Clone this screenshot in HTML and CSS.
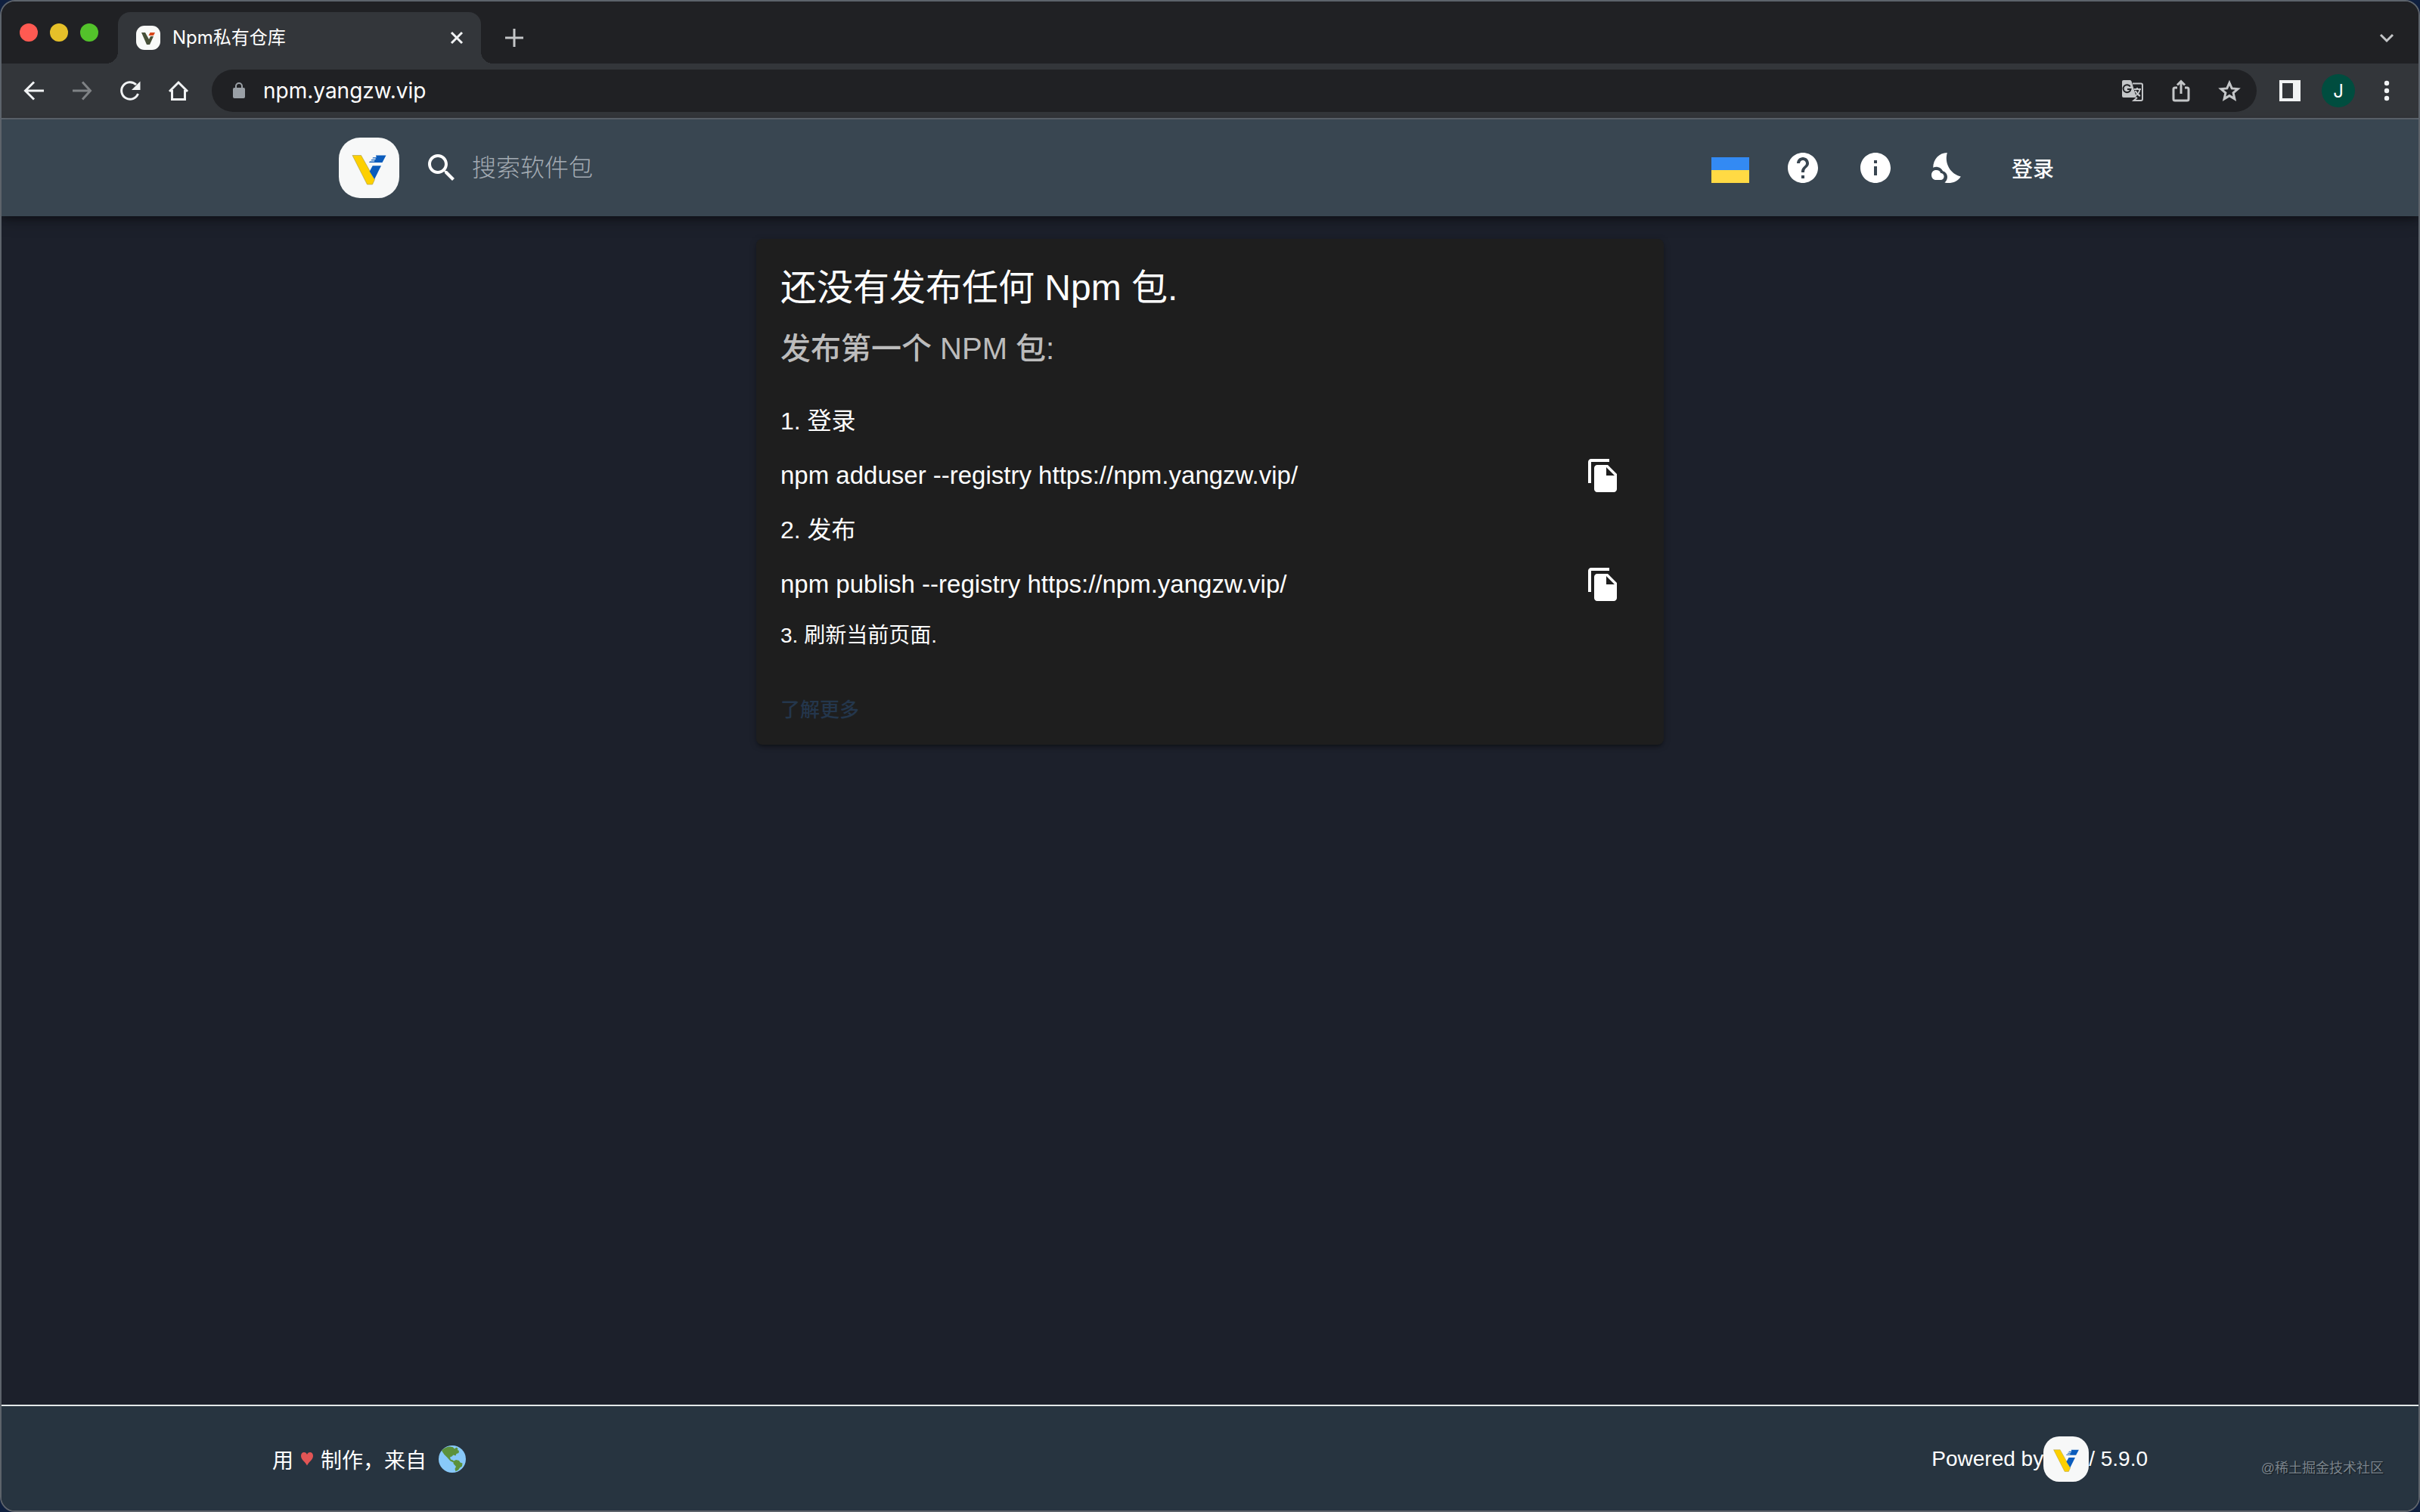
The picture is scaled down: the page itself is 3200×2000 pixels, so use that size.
FILE: index.html
```html
<!DOCTYPE html>
<html lang="zh-CN">
<head>
<meta charset="utf-8">
<meta name="viewport" content="width=device-width, initial-scale=1">
<title>Npm私有仓库</title>
<link rel="stylesheet" href="styles.css">
</head>
<body>
<svg class="defs" aria-hidden="true">
  <symbol id="logo" viewBox="0 0 80 80">
    <rect width="80" height="80" rx="28" fill="#f7f8f8"/>
    <path d="M18 23.500h11.500l18 32-3 6.500h-7z" fill="#fdd000" stroke="#a59a50" stroke-width=".6"/>
    <path d="M49 23.500h13.500l-5 9.500H40l1-1.500h6l.5-1.200h-5l.8-1.300h5l.6-1.500h-4.500l.8-1.300h4.500z" fill="#0b5cbc"/>
    <path d="M44.700 37.300H56L47.200 55 40.700 44.700z" fill="#0b5cbc"/>
  </symbol>
  <symbol id="copy" viewBox="0 0 24 24">
    <path d="M16 1H4c-1.100 0-2 .9-2 2v14h2V3h12V1zm-1 4l6 6v10c0 1.100-.9 2-2 2H7.990C6.890 23 6 22.100 6 21l.01-14c0-1.100.89-2 1.990-2h7zm-1 7h5.500L14 6.500V12z"/>
  </symbol>
</svg>
<div class="window">
  <div class="tabstrip">
    <div class="lights"><span class="light red"></span><span class="light yellow"></span><span class="light green"></span></div>
    <div class="tab">
      <svg class="favicon" viewBox="0 0 32 32"><rect width="32" height="32" rx="11" fill="#f9faf8"/><path d="M7 9h5l5 9 2-4h4l-5 11h-4z" fill="#475038"/><path d="M18.500 9H25l-2 4h-6.500z" fill="#d8481c"/></svg>
      <span class="tab-title">Npm私有仓库</span>
      <button class="chrome-btn tab-close" aria-label="关闭标签页"><svg viewBox="0 0 24 24"><path d="M5 5l14 14M19 5L5 19"/></svg></button>
    </div>
    <button class="chrome-btn new-tab" aria-label="新标签页"><svg viewBox="0 0 24 24"><path d="M12 0v24M0 12h24"/></svg></button>
    <button class="chrome-btn tab-menu" aria-label="搜索标签页"><svg viewBox="0 0 24 24"><path d="M4 8l8 8 8-8"/></svg></button>
  </div>
  <div class="toolbar">
    <div class="nav">
      <button class="chrome-btn" aria-label="后退"><svg viewBox="0 0 32 32"><path d="M30 16H6M17 4.500L5.500 16 17 27.500"/></svg></button>
      <button class="chrome-btn dim" aria-label="前进"><svg viewBox="0 0 32 32"><path d="M4 16h23M17 4.500L27.500 16 17 27.500"/></svg></button>
      <button class="chrome-btn" aria-label="重新加载"><svg viewBox="0 0 32 32"><path d="M26.500 20A11.300 11.300 0 1 1 24 8"/><path class="solid" d="M29.500 3.500V15H18z"/></svg></button>
      <button class="chrome-btn" aria-label="主页"><svg viewBox="0 0 32 32"><path d="M4 17L16 5l12 12M7.500 15v12.500h17V15"/></svg></button>
    </div>
    <div class="omnibox">
      <svg class="lock" viewBox="0 0 16 22"><rect y="7" width="16" height="14" rx="2" fill="#9aa0a6"/><path d="M4 8V5a4 4 0 0 1 8 0v3" fill="none" stroke="#9aa0a6" stroke-width="2"/></svg>
      <input class="url" aria-label="地址" value="npm.yangzw.vip">
      <div class="omni-actions">
        <button class="chrome-btn soft" aria-label="翻译"><svg viewBox="0 0 32 32"><path class="solid" d="M4 2h8.500a2 2 0 0 1 2 1.500L21 25H4a2 2 0 0 1-2-2V4a2 2 0 0 1 2-2z"/><path class="thin" d="M16 6.500h11a2 2 0 0 1 2 2v18.500a2 2 0 0 1-2 2H17.500L22 25M18 14h9M22 12v2M25.500 14c-.5 4-3 7-5.500 8.500M19.500 16c1.500 3 3.500 5.500 6.500 7"/><path class="cut" d="M12.800 10.500a5 5 0 1 0 .7 3.500H9"/></svg></button>
        <button class="chrome-btn soft" aria-label="分享"><svg viewBox="0 0 32 32"><path d="M11 12H8a2 2 0 0 0-2 2v13a2 2 0 0 0 2 2h16a2 2 0 0 0 2-2V14a2 2 0 0 0-2-2h-3M16 20V4M11 8.500L16 3.500l5 5"/></svg></button>
        <button class="chrome-btn soft" aria-label="收藏"><svg viewBox="0 0 32 32"><path d="M16 5.500l3.200 7.400 8 .7-6.100 5.300 1.800 7.900L16 22.600l-6.900 4.200 1.800-7.900-6.100-5.300 8-.7z"/></svg></button>
      </div>
    </div>
    <div class="chrome-right">
      <button class="chrome-btn" aria-label="侧边栏"><svg viewBox="0 0 32 32"><path class="solid" fill-rule="evenodd" d="M2 2h28v28H2zM6 6v20h14V6z"/></svg></button>
      <button class="avatar">J</button>
      <button class="chrome-btn" aria-label="菜单"><svg viewBox="0 0 32 32"><g class="solid"><circle cx="16" cy="6" r="3.200"/><circle cx="16" cy="16" r="3.200"/><circle cx="16" cy="26" r="3.200"/></g></svg></button>
    </div>
  </div>

  <header class="header">
    <div class="header-inner">
      <a class="logo" href="#" aria-label="首页"><svg viewBox="0 0 80 80"><use href="#logo"/></svg></a>
      <label class="search">
        <svg class="icon" viewBox="0 0 24 24"><path d="M15.500 14h-.79l-.28-.27C15.410 12.590 16 11.110 16 9.500 16 5.910 13.090 3 9.500 3S3 5.910 3 9.500 5.910 16 9.500 16c1.610 0 3.090-.59 4.230-1.570l.27.28v.79l5 4.990L20.490 19l-4.990-5zm-6 0C7.010 14 5 11.990 5 9.500S7.010 5 9.500 5 14 7.010 14 9.500 11.990 14 9.500 14z"/></svg>
        <input class="search-input" type="text" placeholder="搜索软件包">
      </label>
      <nav class="actions">
        <button class="icon-btn" aria-label="语言"><svg class="flag" viewBox="0 0 50 34"><path fill="#338af3" d="M0 0h50v17H0z"/><path fill="#ffda44" d="M0 17h50v17H0z"/></svg></button>
        <button class="icon-btn" aria-label="帮助"><svg class="icon" viewBox="0 0 24 24"><path d="M12 2C6.480 2 2 6.480 2 12s4.480 10 10 10 10-4.480 10-10S17.520 2 12 2zm1 17h-2v-2h2v2zm2.070-7.750l-.9.920C13.450 12.900 13 13.500 13 15h-2v-.5c0-1.100.45-2.100 1.170-2.830l1.240-1.260c.37-.36.590-.86.590-1.410 0-1.100-.9-2-2-2s-2 .9-2 2H8c0-2.210 1.790-4 4-4s4 1.790 4 4c0 .88-.36 1.680-.93 2.250z"/></svg></button>
        <button class="icon-btn" aria-label="信息"><svg class="icon" viewBox="0 0 24 24"><path d="M12 2C6.480 2 2 6.480 2 12s4.480 10 10 10 10-4.480 10-10S17.520 2 12 2zm1 15h-2v-6h2v6zm0-8h-2V7h2v2z"/></svg></button>
        <button class="icon-btn" aria-label="深色模式"><svg class="icon" viewBox="1 0 24 24"><path d="M12.400 2C7 2.100 3.100 6.300 3.100 11.900c.6-.3 1.300-.5 2-.5 1.900 0 3.600 1.100 4.400 2.700 1.700.5 3 2 3 3.900 0 1.600-.7 2.900-1.800 3.700 3.900 1.100 8.600-.5 10.700-4C14.500 16.200 10.400 9 12.400 2z"/><path d="M8.100 15.500H8C7.800 14 6.600 13.500 5 13.500c-1.700 0-3 1.300-3 3.200S3.300 20 5 20h3.100c1.200 0 2.200-1 2.200-2.250s-1-2.250-2.200-2.250z"/></svg></button>
        <button class="login">登录</button>
      </nav>
    </div>
  </header>

  <main class="main">
    <section class="card">
      <h1 class="title">还没有发布任何 Npm 包.</h1>
      <h2 class="subtitle">发布第一个 NPM 包:</h2>
      <p class="step">1. 登录</p>
      <div class="command"><span>npm adduser --registry https://npm.yangzw.vip/</span><button class="icon-btn" aria-label="复制"><svg class="icon" viewBox="0 0 24 24"><use href="#copy"/></svg></button></div>
      <p class="step">2. 发布</p>
      <div class="command"><span>npm publish --registry https://npm.yangzw.vip/</span><button class="icon-btn" aria-label="复制"><svg class="icon" viewBox="0 0 24 24"><use href="#copy"/></svg></button></div>
      <p class="last">3. 刷新当前页面.</p>
      <a class="more" href="#">了解更多</a>
    </section>
  </main>

  <footer class="footer">
    <div class="footer-inner">
      <div class="made"><span>用</span><svg class="heart" viewBox="0 0 16 18"><path d="M8 17.500C5.500 12.500 0 10 0 4.800 0 1.800 1.800 0 4 0c2 0 3.300 1.200 4 3 .7-1.800 2-3 4-3 2.200 0 4 1.800 4 4.800 0 5.200-5.500 7.700-8 12.700z" fill="#e25555"/></svg><span>制作，来自</span><svg class="globe" viewBox="0 0 36 36"><circle cx="18" cy="18" r="18" fill="#88c9f9"/><path fill="#5c913b" d="M4 6.500C7 3.500 11 1.500 15 1.500l4 .8 2 2.200 2.500-2 2 1.500-.5 2 2 1-.5 3-3 1-1 2.500-3-1-2 2-2.500 1 1 3 3 1 2 2.500-1.500.5-4-2-4-4.500L7.500 12 5 8.500z"/><path fill="#5c913b" d="M20 20.500l3-1.500 4 1 1.500 2.500 3 1-.5 4-3 2-2 3-3.500 1.700-1-3.200 1.500-3-3.500-4z"/></svg></div>
      <div class="powered"><span>Powered by</span><svg class="mini-logo" viewBox="0 0 80 80"><use href="#logo"/></svg><span>/ 5.9.0</span></div>
    </div>
    <span class="watermark">@稀土掘金技术社区</span>
  </footer>
</div>
</body>
</html>
```
FILE: styles.css
```css
* { box-sizing: border-box; }
html, body { height: 100%; margin: 0; }
body {
  background: #10203f;
  color: #fff;
  font-family: "Liberation Sans", "Noto Sans CJK SC", sans-serif;
  font-size: 28px;
}
h1, h2, p { margin: 0; font-weight: 400; }
button, input { font: inherit; color: inherit; background: none; border: 0; padding: 0; margin: 0; outline: 0; }
.defs { position: absolute; width: 0; height: 0; }

.window {
  min-height: 100vh;
  display: flex;
  flex-direction: column;
  border: 2px solid #5d636b;
  border-radius: 20px;
  overflow: hidden;
  background: #1c202b;
}

/* Browser chrome */
.tabstrip { display: flex; align-items: flex-end; height: 82px; background: #202124; }
.lights { display: flex; gap: 16px; width: 154px; padding-left: 24px; height: 100%; padding-top: 29px; }
.light { width: 24px; height: 24px; border-radius: 50%; }
.red { background: #ff5a52; }
.yellow { background: #e6c029; }
.green { background: #53c22b; }
.tab {
  position: relative;
  display: flex;
  align-items: center;
  width: 480px;
  height: 68px;
  padding: 0 20px 0 24px;
  background: #33363a;
  border-radius: 16px 16px 0 0;
}
.tab::before, .tab::after { content: ""; position: absolute; bottom: 0; width: 16px; height: 16px; }
.tab::before { left: -16px; background: radial-gradient(circle at 0 0, #202124 16px, #33363a 16px); }
.tab::after { right: -16px; background: radial-gradient(circle at 100% 0, #202124 16px, #33363a 16px); }
.favicon { width: 32px; height: 32px; }
.tab-title { flex: 1; margin-left: 16px; font-family: Inter, "Noto Sans CJK SC", sans-serif; font-size: 24px; line-height: 32px; }
.chrome-btn { display: block; width: 32px; height: 32px; color: #f1f3f4; }
.chrome-btn svg { display: block; width: 100%; height: 100%; fill: none; stroke: currentColor; stroke-width: 3; }
.chrome-btn .solid { fill: currentColor; stroke: none; }
.chrome-btn .thin { stroke-width: 2; }
.chrome-btn .cut { stroke: #202124; stroke-width: 2; }
.chrome-btn.dim { color: #7f8285; }
.chrome-btn.soft { color: #c4c6c8; }
.tab-close, .new-tab, .tab-menu { width: 24px; height: 24px; }
.new-tab { margin: 0 0 22px 32px; color: #c4c6c8; }
.tab-menu { margin: 0 30px 22px auto; color: #c4c6c8; }
.toolbar { display: flex; align-items: center; height: 74px; padding: 0 26px; background: #33363a; border-bottom: 2px solid #5f666f; }
.nav { display: flex; gap: 32px; width: 252px; }
.omnibox { flex: 1; display: flex; align-items: center; height: 56px; padding: 0 20px 0 28px; border-radius: 28px; background: #202124; }
.lock { width: 16px; height: 22px; }
.url { flex: 1; min-width: 0; margin-left: 24px; font-family: Inter, sans-serif; font-size: 28px; height: 40px; }
.omni-actions { display: flex; gap: 32px; }
.chrome-right { display: flex; align-items: center; gap: 26px; margin-left: 28px; }
.avatar { width: 44px; height: 44px; border-radius: 50%; background: #004d3f; font-family: Inter, sans-serif; font-size: 24px; text-align: center; }

/* Site header */
.header { position: relative; background: #394651; box-shadow: 0 4px 8px rgba(0, 0, 0, .3), 0 8px 20px rgba(0, 0, 0, .2); }
.header-inner { display: flex; align-items: center; width: 100%; max-width: 2400px; height: 128px; margin: 0 auto; padding: 0 48px; }
.logo, .logo svg { display: block; width: 80px; height: 80px; }
.search { display: flex; flex: 1; align-items: center; gap: 16px; margin-left: 32px; }
.icon { display: block; flex: none; width: 48px; height: 48px; fill: currentColor; }
.search-input { flex: 1; min-width: 0; height: 48px; font-size: 32px; }
.search-input::placeholder { color: #a3abb3; opacity: 1; font-weight: 300; }
.actions { display: flex; align-items: center; }
.icon-btn { display: flex; flex: none; align-items: center; justify-content: center; width: 96px; height: 96px; }
.flag { width: 50px; height: 34px; margin-top: 6px; }
.login { width: 128px; height: 72px; font-weight: 500; }

/* Empty state card */
.main { flex: 1; padding: 30px 48px; }
.card {
  display: flex;
  flex-direction: column;
  align-items: stretch;
  width: 100%;
  max-width: 1200px;
  margin: 0 auto;
  padding: 33px 32px 24px;
  border-radius: 8px;
  background: #1e1e1e;
  box-shadow: 0 4px 4px -2px rgba(0, 0, 0, .3), 0 2px 8px rgba(0, 0, 0, .25);
}
.title { font-size: 48px; line-height: 64px; }
.subtitle { margin-top: 16px; font-size: 40px; line-height: 64px; font-weight: 500; color: #bcbcbc; }
.step { margin-top: 40px; font-size: 32px; line-height: 48px; }
.command { display: flex; align-items: center; justify-content: space-between; height: 96px; font-size: 33px; }
.command + .step { margin-top: 0; }
.last { line-height: 40px; }
.more { align-self: flex-start; margin-top: 56px; color: #24364c; font-size: 26px; line-height: 44px; font-weight: 500; text-decoration: none; }

/* Footer */
.footer { position: relative; background: #273440; border-top: 2px solid #e3e8e8; }
.footer-inner { display: flex; align-items: center; justify-content: space-between; width: 100%; max-width: 2480px; height: 138px; margin: 0 auto; padding-top: 2px; }
.made, .powered { display: flex; align-items: center; }
.heart { width: 16px; height: 18px; margin: 0 10px; }
.globe { width: 36px; height: 36px; margin-left: 16px; }
.mini-logo { width: 60px; height: 60px; }
.watermark { position: absolute; right: 46px; bottom: 42px; color: #7b848c; font-size: 18px; line-height: 28px; text-shadow: 1px 1px 1px #10181f; }
```
